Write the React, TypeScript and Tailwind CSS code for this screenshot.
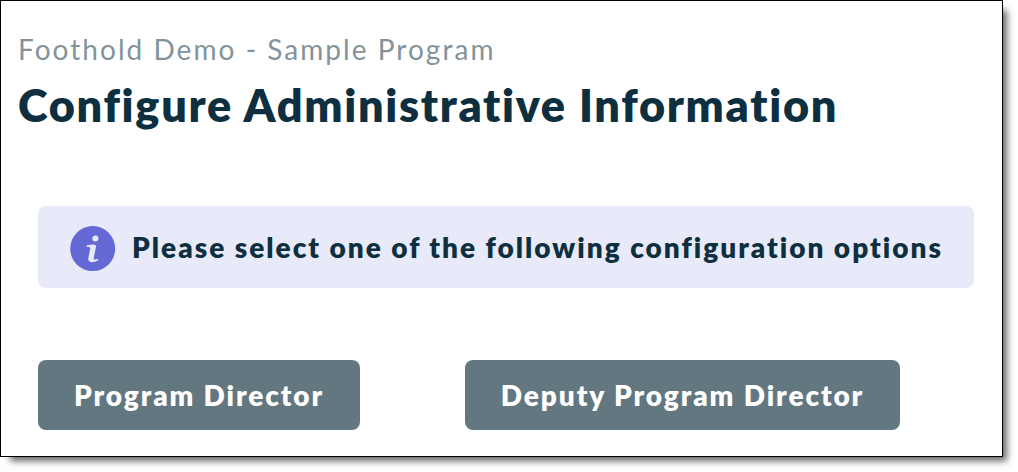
const options = [
  { label: 'Program Director', box: 'w-[322px]' },
  { label: 'Deputy Program Director', box: 'w-[435px]' },
]

function InfoIcon() {
  return (
    <svg viewBox="0 0 46 46" className="mt-1 h-[46px] w-[46px] shrink-0" aria-hidden="true">
      <circle cx="22.7" cy="22.6" r="22.5" fill="#6469d5" />
      <circle cx="25.4" cy="12.4" r="3" fill="#e8e9f9" />
      <path
        d="M16.8 19.4c2.6-.7 5-.9 6.5-.9 2.3 0 3 1.1 2.6 3l-2.1 10c-.3 1.4.1 2 1.3 2 1 0 1.9-.3 2.8-.7l.3 1.5c-1.8 1.3-3.8 1.9-6 1.9-3.3 0-4.4-1.6-3.8-4.5l1.7-8.5c.3-1.5-.2-2.1-1.5-2.1h-1.9z"
        fill="#e8e9f9"
      />
    </svg>
  )
}

export default function App() {
  return (
    <div className="h-[472px] w-[1018px] overflow-hidden bg-white font-['Lato',sans-serif]">
      <main className="h-[457px] w-[1003px] border border-black bg-white pl-[17px] shadow-[7px_7px_7px_-3px_rgba(0,0,0,0.6)]">
        <p className="pt-[30px] text-[28px] leading-[36px] tracking-[2.04px] whitespace-nowrap text-[#84939b]">
          Foothold Demo - Sample Program
        </p>
        <h1 className="mt-[10px] text-[45px] leading-[56px] font-extrabold tracking-[1.7px] whitespace-nowrap text-[#0d2f40]">
          Configure Administrative Information
        </h1>

        <div className="mt-[73px] ml-5 flex h-[82px] w-[936px] items-center gap-4 rounded-lg bg-[#e8e9f9] pl-8">
          <InfoIcon />
          <p className="text-[28px] font-extrabold tracking-[2px] whitespace-nowrap text-[#0d2f40]">
            Please select one of the following configuration options
          </p>
        </div>

        <div className="mt-[72px] ml-5 flex gap-[105px]">
          {options.map(({ label, box }) => (
            <button
              key={label}
              type="button"
              className={`h-[70px] rounded-lg bg-[#637781] text-[28px] font-extrabold tracking-[1.9px] whitespace-nowrap text-white ${box}`}
            >
              {label}
            </button>
          ))}
        </div>
      </main>
    </div>
  )
}
